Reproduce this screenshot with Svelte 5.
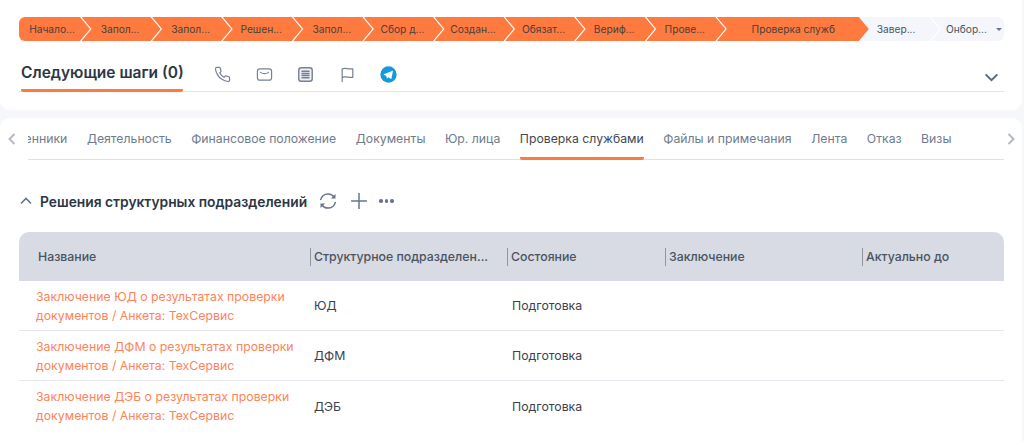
<script>
  const steps = [
    { label: 'Начало...', kind: 'first done' },
    { label: 'Запол...', kind: 'done' },
    { label: 'Запол...', kind: 'done' },
    { label: 'Решен...', kind: 'done' },
    { label: 'Запол...', kind: 'done' },
    { label: 'Сбор д...', kind: 'done' },
    { label: 'Создан...', kind: 'done' },
    { label: 'Обязат...', kind: 'done' },
    { label: 'Вериф...', kind: 'done' },
    { label: 'Прове...', kind: 'done' },
    { label: 'Проверка служб', kind: 'done current' },
    { label: 'Завер...', kind: 'todo' },
    { label: 'Онбор...', kind: 'todo last' },
  ];

  const tabs = [
    'Родственники',
    'Деятельность',
    'Финансовое положение',
    'Документы',
    'Юр. лица',
    'Проверка службами',
    'Файлы и примечания',
    'Лента',
    'Отказ',
    'Визы',
  ];
  const activeTab = 'Проверка службами';

  const columns = ['Название', 'Структурное подразделен...', 'Состояние', 'Заключение', 'Актуально до'];

  const rows = [
    { title: 'Заключение ЮД о результатах проверки документов / Анкета: ТехСервис', unit: 'ЮД' },
    { title: 'Заключение ДФМ о результатах проверки документов / Анкета: ТехСервис', unit: 'ДФМ' },
    { title: 'Заключение ДЭБ о результатах проверки документов / Анкета: ТехСервис', unit: 'ДЭБ' },
  ];
</script>

<div class="page">
  <section class="card top">
    <div class="path">
      {#each steps as step}
        <div class="step {step.kind}">{step.label}</div>
      {/each}
      <span class="caret"></span>
    </div>

    <div class="steps-row">
      <h2>Следующие шаги (0)</h2>
      <div class="actions">
        <svg viewBox="0 0 24 24" class="ico"><path d="M22 16.900v3a2 2 0 0 1-2.200 2 19.800 19.800 0 0 1-8.600-3.100 19.500 19.500 0 0 1-6-6A19.800 19.800 0 0 1 2.100 4.200 2 2 0 0 1 4.100 2h3a2 2 0 0 1 2 1.700c.1 1 .4 1.900.7 2.800a2 2 0 0 1-.5 2.100L8.100 9.900a16 16 0 0 0 6 6l1.300-1.300a2 2 0 0 1 2.100-.4c.9.3 1.800.6 2.800.7a2 2 0 0 1 1.700 2z"/></svg>
        <svg viewBox="0 0 24 24" class="ico"><rect x="2" y="4" width="20" height="16" rx="3.500"/><path d="M6.500 9c3.500 2.400 7.500 2.400 11 0"/></svg>
        <svg viewBox="0 0 24 24" class="ico box"><rect x="2.500" y="2.500" width="19" height="19" rx="3.500"/><path d="M7 7.500h10M7 10.500h10M7 13.500h10M7 16.500h10"/></svg>
        <svg viewBox="0 0 24 24" class="ico"><path d="M4.500 22V4c4.500-1.800 8.500 1 15 0v12c-6 1-10.500-1.800-15 0"/></svg>
        <svg viewBox="0 0 24 24" class="tg">
          <circle cx="12" cy="12" r="11.500" fill="#129bd8"/>
          <path d="M5 11.800l12.300-4.900c.6-.2 1.100.1.900 1l-2 9.700c-.2.700-.6.800-1.200.5l-3.100-2.300-1.500 1.500c-.3.300-.5.300-.7-.1l-1-3.500-3-1c-.7-.2-.7-.6.300-.9z" fill="#fff"/>
        </svg>
      </div>
      <svg viewBox="0 0 16 10" class="collapse"><path d="M1.500 1.500L8 8l6.500-6.500"/></svg>
    </div>
  </section>

  <section class="card main">
    <div class="tabs-wrap">
      <svg viewBox="0 0 8 12" class="arrow"><path d="M6.500 1L1.500 6l5 5"/></svg>
      <div class="tabs">
        <div class="tabs-inner">
          {#each tabs as tab}
            <div class="tab" class:active={tab === activeTab}>{tab}</div>
          {/each}
        </div>
      </div>
      <svg viewBox="0 0 8 12" class="arrow"><path d="M1.500 1l5 5-5 5"/></svg>
    </div>

    <div class="section-head">
      <svg viewBox="0 0 12 8" class="up"><path d="M1 6.500L6 1.500l5 5"/></svg>
      <h3>Решения структурных подразделений</h3>
      <svg viewBox="0 0 24 24" class="tool"><path d="M3 11C4 6.500 7.800 3.500 12 3.500c3.200 0 5.800 1.500 7.500 4"/><path d="M21 13c-1 4.500-4.800 7.500-9 7.500-3.200 0-5.800-1.500-7.500-4"/><path d="M21 3.500v5.500h-5.500zM3 20.500v-5.500h5.500z" class="solid"/></svg>
      <svg viewBox="0 0 24 24" class="tool plus"><path d="M12 2.500v19M2.500 12h19"/></svg>
      <div class="dots"><i></i><i></i><i></i></div>
    </div>

    <div class="table">
      <div class="thead">
        {#each columns as col}
          <div class="th">{col}</div>
        {/each}
      </div>
      {#each rows as row}
        <div class="tr">
          <div class="td name"><span>{row.title}</span></div>
          <div class="td">{row.unit}</div>
          <div class="td state">Подготовка</div>
          <div class="td"></div>
          <div class="td"></div>
        </div>
      {/each}
    </div>
  </section>
</div>

<style>
  :global(body) {
    margin: 0;
    background: #f5f7fb;
    overflow: hidden;
  }

  .page {
    width: 1022px;
    height: 441px;
    overflow: hidden;
    font-family: Inter, 'Noto Sans', sans-serif;
    color: #39424f;
  }

  .card {
    background: #fff;
  }
  .top {
    height: 110px;
    box-sizing: border-box;
    padding: 17px 18px 0 19px;
    border-radius: 0 0 10px 10px;
  }
  .main {
    margin-top: 8px;
    height: 323px;
    border-radius: 10px 10px 0 0;
  }

  .path {
    position: relative;
    display: flex;
    height: 24px;
    border-radius: 6px;
    overflow: hidden;
  }
  .step {
    flex: 0 0 79.100px;
    margin-left: -8.500px;
    box-sizing: border-box;
    padding-right: 2px;
    display: flex;
    align-items: center;
    justify-content: center;
    font-size: 10.200px;
    white-space: nowrap;
    clip-path: polygon(0 0, calc(100% - 10px) 0, 100% 50%, calc(100% - 10px) 100%, 0 100%, 10px 50%);
  }
  .done {
    background: #ff7a3f;
    color: #44413f;
  }
  .todo {
    background: #f4f6fb;
    color: #4a5566;
  }
  .first {
    flex-basis: 71px;
    margin-left: 0;
    padding-right: 5px;
    clip-path: polygon(0 0, calc(100% - 10px) 0, 100% 50%, calc(100% - 10px) 100%, 0 100%);
  }
  .current {
    flex-basis: 152px;
    padding: 0 0 0 1px;
    z-index: 1;
  }
  .current + .todo {
    margin-left: -10px;
    flex-basis: 80.500px;
    padding-right: 6px;
  }
  .last {
    flex: 1;
    padding-right: 2px;
    clip-path: polygon(0 0, 100% 0, 100% 100%, 0 100%, 10px 50%);
  }
  .caret {
    position: absolute;
    right: 2px;
    top: 11px;
    border: 3px solid transparent;
    border-top-color: #6d7688;
  }

  .steps-row {
    display: flex;
    align-items: center;
    height: 50px;
    border-bottom: 1px solid #e2e4ee;
  }
  h2 {
    margin: 0 0 -1px 2px;
    width: 162px;
    flex: none;
    align-self: stretch;
    box-sizing: border-box;
    padding-top: 22px;
    font-size: 15.500px;
    font-weight: 600;
    color: #2d3644;
    white-space: nowrap;
    border-bottom: 3px solid #ff7a3f;
    border-radius: 0 0 2px 2px;
  }
  .actions {
    display: flex;
    align-items: center;
    gap: 24.500px;
    margin-left: 31px;
    padding-top: 16px;
  }
  .ico {
    width: 17px;
    height: 17px;
    fill: none;
    stroke: #758196;
    stroke-width: 1.700;
    stroke-linecap: round;
    stroke-linejoin: round;
  }
  .box {
    fill: #eef0f5;
    stroke-width: 2;
  }
  .tg {
    width: 17px;
    height: 17px;
  }
  .collapse {
    width: 15px;
    height: 9px;
    margin-left: auto;
    margin-right: 5px;
    margin-top: 22px;
    fill: none;
    stroke: #5c6980;
    stroke-width: 2.200;
  }

  .tabs-wrap {
    display: flex;
    align-items: flex-start;
    height: 42px;
  }
  .arrow {
    flex: none;
    width: 8px;
    height: 12px;
    margin: 15px 0 0 8px;
    fill: none;
    stroke: #b4b9c3;
    stroke-width: 2;
  }
  .tabs {
    width: 976px;
    margin-left: 12px;
    height: 42px;
    overflow: hidden;
    position: relative;
  }
  .tabs-wrap .arrow:last-child {
    margin-left: 3px;
  }
  .tabs::before {
    content: '';
    position: absolute;
    left: -9px;
    right: 0;
    bottom: 0;
    height: 1px;
    background: #dfe1e6;
  }
  .tabs-inner {
    display: flex;
    gap: 19.500px;
    margin-left: -46px;
  }
  .tab {
    flex: none;
    font-size: 12.250px;
    line-height: 42px;
    height: 42px;
    box-sizing: border-box;
    color: #6f7b8e;
    white-space: nowrap;
  }
  .tab.active {
    color: #3f4754;
    border-bottom: 3px solid #ff7a3f;
    border-radius: 0 0 2px 2px;
    position: relative;
    z-index: 1;
  }

  .section-head {
    display: flex;
    align-items: center;
    height: 24px;
    margin: 29px 0 19px 20px;
  }
  h3 {
    margin: 0 0 0 8px;
    padding-top: 1px;
    font-size: 13.800px;
    font-weight: 600;
    color: #2d3644;
    white-space: nowrap;
  }
  .up {
    width: 12px;
    height: 8px;
    fill: none;
    stroke: #66738a;
    stroke-width: 1.600;
  }
  .tool {
    width: 20px;
    height: 20px;
    margin-left: 11px;
    fill: none;
    stroke: #68758a;
    stroke-width: 1.800;
  }
  .solid {
    fill: #68758a;
    stroke: none;
  }
  .plus {
    margin-left: 11px;
  }
  .dots {
    display: flex;
    gap: 2px;
    margin-left: 10px;
  }
  .dots i {
    width: 3.500px;
    height: 3.500px;
    border-radius: 50%;
    background: #68758a;
  }

  .table {
    margin: 0 18px 0 19px;
  }
  .thead,
  .tr {
    display: grid;
    grid-template-columns: 291px 197px 158px 197px 1fr;
  }
  .thead {
    height: 49px;
    align-items: center;
    background: #d8dbe3;
    border-radius: 10px 10px 0 0;
  }
  .th {
    font-size: 12.300px;
    font-weight: 500;
    color: #4a5361;
    padding-left: 3px;
    height: 18px;
    line-height: 18px;
    border-left: 1px solid #8e96a4;
    white-space: nowrap;
  }
  .th:first-child {
    padding-left: 19px;
    border-left: none;
  }
  .tr {
    height: 50px;
    box-sizing: border-box;
    border-bottom: 1px solid #e5e7ec;
    align-items: center;
  }
  .tr:last-child {
    border-bottom: none;
  }
  .td {
    font-size: 12.300px;
    color: #39424f;
    padding-left: 4px;
  }
  .state {
    padding-left: 5px;
  }
  .name {
    padding-left: 17px;
    color: #ff835a;
    line-height: 19px;
  }
  .name span {
    display: block;
    width: 272px;
  }
</style>
